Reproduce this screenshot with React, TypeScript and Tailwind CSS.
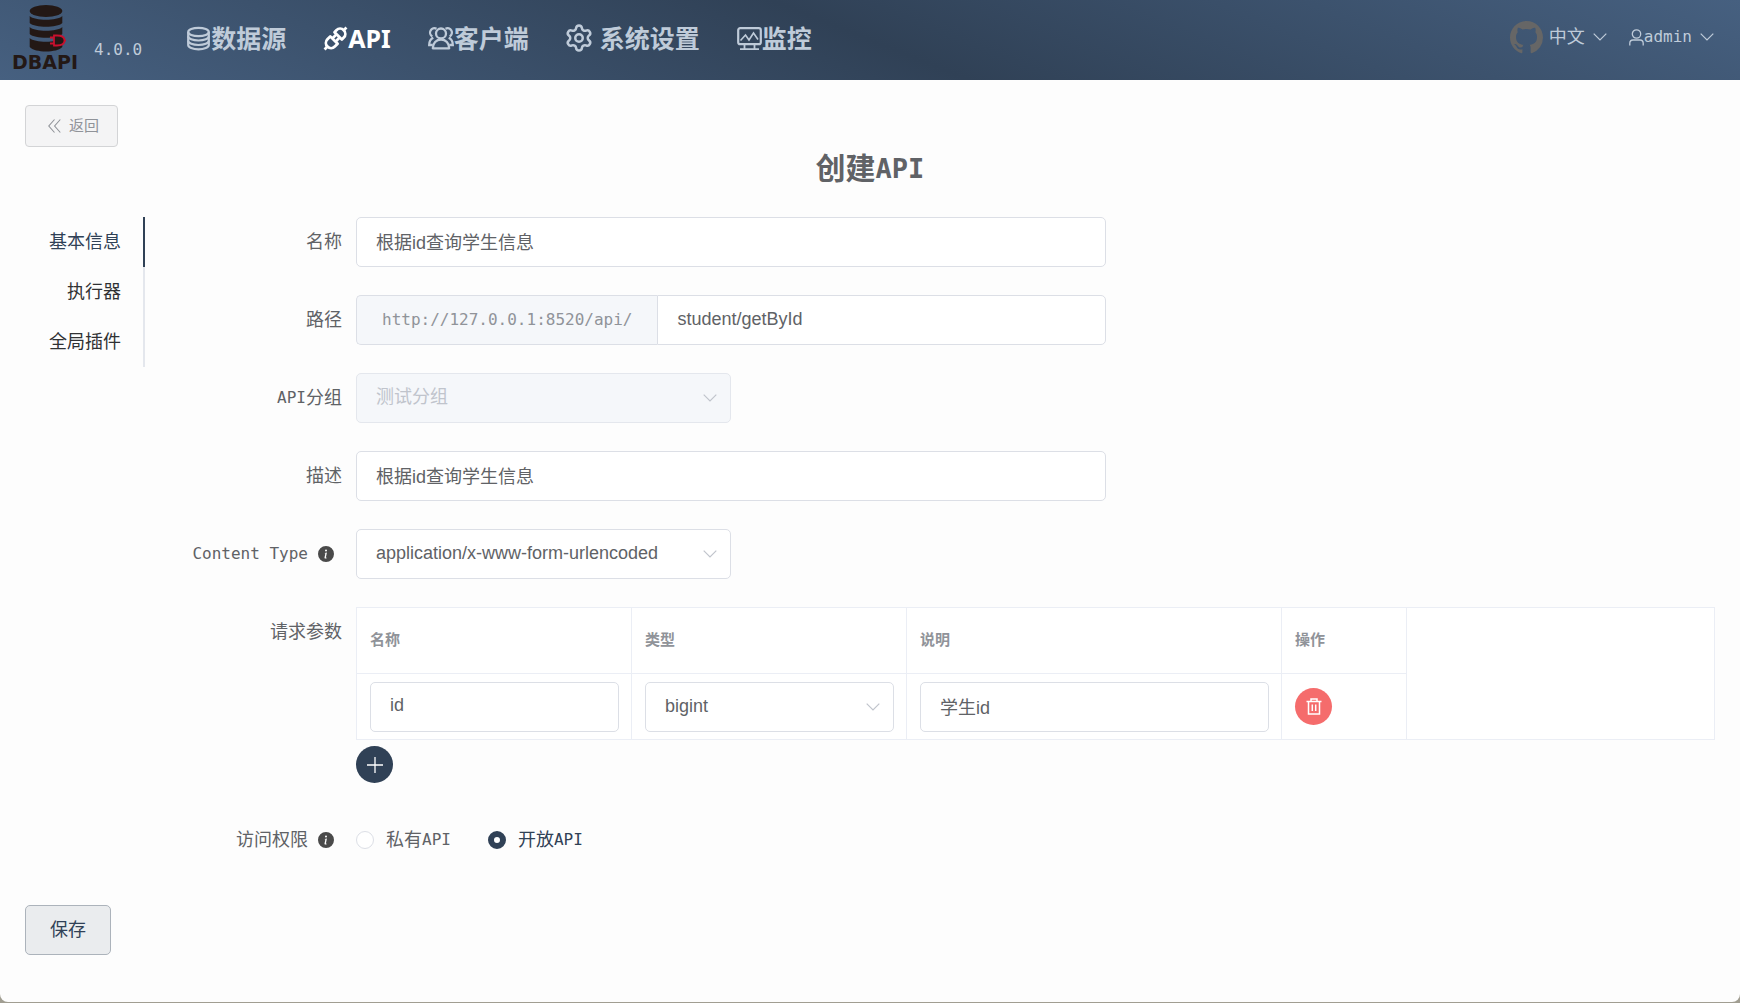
import React, { useState } from "react";
import { Settings } from "lucide-react";
import { BsInfoCircleFill } from "react-icons/bs";

const mono = "font-['DejaVu_Sans_Mono','Noto_Sans_CJK_SC',monospace]";

function Mono({ children }: { children: React.ReactNode }) {
  return <span className="font-['DejaVu_Sans_Mono',monospace] text-base leading-none">{children}</span>;
}

function Logo() {
  return (
    <div className="flex w-[66px] flex-col items-center pb-1">
      <svg viewBox="0 0 66 48" className="h-12 w-[66px]" aria-hidden="true">
        <g fill="#231815">
          <ellipse cx="34" cy="6" rx="16.300" ry="6" />
          <path d="M17.700 11c5 5 27.600 5 32.600 0v7c-5 5-27.600 5-32.600 0z" />
          <path d="M17.700 22c5 5 27.600 5 32.600 0v7c-5 5-27.600 5-32.600 0z" />
          <path d="M17.700 33c5 5 27.600 5 32.600 0v9c-5 6-27.600 6-32.600 0z" />
        </g>
        <path
          d="M42 30.500h3c5 0 7.500 2 7.500 5s-2.500 5-7.500 5h-3zM38 32.500h4M38 38.500h4M52 35.500h2"
          fill="#231815"
          stroke="#c8102e"
          strokeWidth="1.800"
        />
      </svg>
      <span className="font-['DejaVu_Sans',sans-serif] text-[19px] leading-[18px] font-bold text-[#231815]">DBAPI</span>
    </div>
  );
}

const navIcon = "h-[25px] shrink-0";

function CoinIcon() {
  return (
    <svg viewBox="0 0 24 25" className={`${navIcon} w-6`} fill="none" stroke="currentColor" strokeWidth="2.200" aria-hidden="true">
      <ellipse cx="11.500" cy="6" rx="10.300" ry="4.200" />
      <path d="M1.200 6v13c0 2.300 4.600 4.300 10.300 4.300s10.300-2 10.300-4.300V6" />
      <path d="M1.200 10.200c0 2.400 4.600 4.300 10.300 4.300s10.300-1.900 10.300-4.300M1.200 14.700c0 2.400 4.600 4.300 10.300 4.300s10.300-1.900 10.300-4.300" />
    </svg>
  );
}

function ConnectionIcon() {
  return (
    <svg viewBox="0 0 25 25" className={`${navIcon} w-[25px]`} fill="none" stroke="currentColor" strokeWidth="2.800" aria-hidden="true">
      <g transform="rotate(-45 12.500 12.500)">
        <path d="M10.300 7.300H6.300a5.200 5.200 0 0 0 0 10.400h4z" strokeLinejoin="round" />
        <path d="M16.300 7.300h2.700a5.200 5.200 0 0 1 0 10.400h-2.700z" strokeLinejoin="round" />
        <path d="M10.500 10.300h6M10.500 14.700h6M-3 12.500h4.500M24 12.500h4" />
      </g>
    </svg>
  );
}

function UsersIcon() {
  return (
    <svg viewBox="0 0 26 25" className={`${navIcon} w-[26px]`} fill="none" stroke="currentColor" strokeWidth="2.300" aria-hidden="true">
      <circle cx="13" cy="7.500" r="5" />
      <path d="M4.800 22.300c0-5 3.400-8.800 8.200-8.800s8.200 3.800 8.200 8.800z" strokeLinejoin="round" />
      <path d="M8.500 2.800a4.300 4.300 0 0 0-4.200 7.600M5.300 11.800c-2.700 1.200-4.100 3.700-4.100 7.200h3.500M17.500 2.800a4.300 4.300 0 0 1 4.200 7.600M20.700 11.800c2.700 1.200 4.100 3.700 4.100 7.200h-3.500" />
    </svg>
  );
}

function MonitorIcon() {
  return (
    <svg viewBox="0 0 25 25" className={`${navIcon} w-[25px]`} fill="none" stroke="currentColor" strokeWidth="2.200" aria-hidden="true">
      <rect x="1.200" y="2.200" width="22.600" height="16" rx="2" />
      <path d="M3.500 14.500 8.500 9l3.500 5 4.500-7 4.500 6.500" strokeWidth="1.600" />
      <path d="M7.500 18v5M17.500 18v5M3 23.200h19" strokeWidth="1.800" />
    </svg>
  );
}

function Chevron({ className }: { className: string }) {
  return (
    <svg viewBox="0 0 14 8" className={className} fill="none" stroke="currentColor" strokeWidth="1.200" aria-hidden="true">
      <path d="M.7.700 7 7 13.300.700" />
    </svg>
  );
}

function GithubIcon() {
  return (
    <svg viewBox="0 0 16 16" className="size-[33px]" fill="#666" aria-hidden="true">
      <path d="M8 0C3.58 0 0 3.58 0 8c0 3.54 2.29 6.53 5.47 7.59.4.07.55-.17.55-.38 0-.19-.01-.82-.01-1.49-2.01.37-2.53-.49-2.69-.94-.09-.23-.48-.94-.82-1.13-.28-.15-.68-.52-.01-.53.63-.01 1.08.58 1.23.82.72 1.21 1.87.87 2.33.66.07-.52.28-.87.51-1.07-1.78-.2-3.64-.89-3.64-3.95 0-.87.31-1.59.82-2.15-.08-.2-.36-1.02.08-2.12 0 0 .67-.21 2.2.82.64-.18 1.32-.27 2-.27.68 0 1.36.09 2 .27 1.53-1.04 2.2-.82 2.2-.82.44 1.1.16 1.92.08 2.12.51.56.82 1.27.82 2.15 0 3.07-1.87 3.75-3.65 3.95.29.25.54.73.54 1.48 0 1.07-.01 1.93-.01 2.2 0 .21.15.46.55.38A8.013 8.013 0 0 0 16 8c0-4.42-3.58-8-8-8z" />
    </svg>
  );
}

const navItems = [
  { label: "数据源", icon: <CoinIcon />, spaced: false },
  { label: "API", icon: <ConnectionIcon />, spaced: false },
  { label: "客户端", icon: <UsersIcon />, spaced: false },
  { label: "系统设置", icon: <Settings className="-mx-0.5 size-[30px] shrink-0" strokeWidth={2} />, spaced: true },
  { label: "监控", icon: <MonitorIcon />, spaced: false },
];

function Header() {
  return (
    <header className="flex h-20 items-center bg-[linear-gradient(22deg,#466080,#304156,#466080)] pr-[26px] pl-3 text-[#bfcbd9]">
      <Logo />
      <span className={`mt-5 ml-4 text-base ${mono}`}>4.0.0</span>
      <nav className="ml-[45px] flex items-center gap-[37px] pb-1">
        {navItems.map((item) => (
          <a
            key={item.label}
            href="#"
            aria-current={item.label === "API" ? "page" : undefined}
            className={`flex items-center font-['Noto_Sans','Noto_Sans_CJK_SC',sans-serif] text-[25px] leading-8 font-bold whitespace-nowrap ${
              item.label === "API" ? "text-white" : ""
            } ${item.spaced ? "gap-2" : ""}`}
          >
            {item.icon}
            <span>{item.label}</span>
          </a>
        ))}
      </nav>
      <div className="ml-auto flex items-center pb-1.5">
        <a href="#" aria-label="GitHub">
          <GithubIcon />
        </a>
        <button type="button" className="ml-1.5 flex items-center gap-2 text-lg leading-6">
          中文
          <Chevron className="h-2 w-3.5" />
        </button>
        <button type="button" className="ml-[22px] flex items-center leading-6">
          <svg viewBox="0 0 15 17" className="h-[17px] w-[15px]" fill="none" stroke="currentColor" strokeWidth="1.300" aria-hidden="true">
            <circle cx="7.500" cy="5" r="4.200" />
            <path d="M.8 16.500v-2.300c0-2 1.400-3.200 3.200-3.200h7c1.800 0 3.200 1.200 3.200 3.200v2.300" />
          </svg>
          <Mono>admin</Mono>
          <Chevron className="ml-2 h-2 w-3.5" />
        </button>
      </div>
    </header>
  );
}

const tabs = ["基本信息", "执行器", "全局插件"];

function SideTabs() {
  const [active, setActive] = useState(tabs[0]);
  return (
    <div role="tablist" aria-orientation="vertical" className="flex w-[120px] shrink-0 flex-col self-start">
      {tabs.map((tab) => (
        <button
          key={tab}
          type="button"
          role="tab"
          aria-selected={tab === active}
          onClick={() => setActive(tab)}
          className={`h-[50px] border-r-2 pr-[22px] text-right text-lg ${
            tab === active ? "border-[#304156] text-[#304156]" : "border-[#e4e7ed] text-[#303133]"
          }`}
        >
          {tab}
        </button>
      ))}
    </div>
  );
}

function Row({ label, htmlFor, info, children }: { label: React.ReactNode; htmlFor?: string; info?: boolean; children: React.ReactNode }) {
  return (
    <div className="flex items-start gap-3.5">
      <div className="flex h-[50px] w-[197px] shrink-0 items-center justify-end text-lg whitespace-nowrap">
        <label htmlFor={htmlFor} className="flex items-center">
          {label}
        </label>
        {info && <BsInfoCircleFill className="mr-2 ml-2.5 size-4 text-[#4a4a4a]" />}
      </div>
      <div className="min-w-0 flex-1">{children}</div>
    </div>
  );
}

const box =
  "h-[50px] w-full rounded-[5px] border border-[#dcdfe6] bg-white px-[19px] pb-0.5 font-['Liberation_Sans','Noto_Sans_CJK_SC',sans-serif] text-lg leading-6 text-[#606266] outline-none focus:border-[#304156]";

function SelectBox({ id, label, options, disabled }: { id: string; label?: string; options: string[]; disabled?: boolean }) {
  return (
    <div className="relative">
      <select
        id={id}
        aria-label={label}
        disabled={disabled}
        className={`${box} appearance-none disabled:border-[#e4e7ed] disabled:bg-[#f5f7fa] disabled:text-[#c0c4cc] disabled:opacity-100`}
      >
        {options.map((option) => (
          <option key={option}>{option}</option>
        ))}
      </select>
      <Chevron className="pointer-events-none absolute top-[21px] right-3.5 h-2 w-3.5 text-[#c0c4cc]" />
    </div>
  );
}

const cell = "border-r border-b border-[#ebeef5] pr-3 pl-[13px] text-left";

function ParamsTable() {
  return (
    <table className="w-full table-fixed border-separate border-spacing-0 border-t border-l border-[#ebeef5] bg-white">
      <colgroup>
        <col className="w-[275px]" />
        <col className="w-[275px]" />
        <col className="w-[375px]" />
        <col className="w-[125px]" />
        <col />
      </colgroup>
      <thead>
        <tr className="h-[66px] text-[15px] text-[#909399]">
          <th className={cell}>名称</th>
          <th className={cell}>类型</th>
          <th className={cell}>说明</th>
          <th className={cell}>操作</th>
          <td className="border-r border-[#ebeef5]" />
        </tr>
      </thead>
      <tbody>
        <tr className="h-[66px]">
          <td className={cell}>
            <input aria-label="名称" defaultValue="id" className={box} />
          </td>
          <td className={cell}>
            <SelectBox id="param-type" label="类型" options={["bigint", "string", "double", "date"]} />
          </td>
          <td className={cell}>
            <input aria-label="说明" defaultValue="学生id" className={box} />
          </td>
          <td className={cell}>
            <button type="button" aria-label="删除" className="flex size-[37px] items-center justify-center rounded-full bg-[#f56c6c] text-white">
              <svg viewBox="0 0 16 17" className="h-[17px] w-4" fill="none" stroke="currentColor" strokeWidth="1.500" aria-hidden="true">
                <path d="M.5 3.500h15M5 3.200V1h6v2.200M2.500 3.500V16h11V3.500M6.300 6.500v6.500M9.700 6.500v6.500" />
              </svg>
            </button>
          </td>
          <td className="border-r border-b border-[#ebeef5]" />
        </tr>
      </tbody>
    </table>
  );
}

function RadioOption({ value, text, checked, onSelect }: { value: string; text: string; checked: boolean; onSelect: () => void }) {
  return (
    <label className={`flex items-center text-lg ${checked ? "text-[#304156]" : ""}`}>
      <input
        type="radio"
        name="access"
        value={value}
        checked={checked}
        onChange={onSelect}
        className="mr-3 size-[18px] appearance-none rounded-full border border-[#dcdfe6] bg-white checked:border-[6px] checked:border-[#304156]"
      />
      {text}
      <Mono>API</Mono>
    </label>
  );
}

function BasicForm() {
  const [access, setAccess] = useState("open");
  return (
    <form className="flex min-w-0 flex-1 flex-col gap-7" onSubmit={(event) => event.preventDefault()}>
      <Row label="名称" htmlFor="name">
        <input id="name" defaultValue="根据id查询学生信息" className={`${box} max-w-[750px]`} />
      </Row>
      <Row label="路径" htmlFor="path">
        <div className="flex w-full max-w-[750px]">
          <span className={`flex items-center rounded-l-[5px] border border-r-0 border-[#dcdfe6] bg-[#f5f7fa] px-[25px] text-base text-[#909399] ${mono}`}>
            http://127.0.0.1:8520/api/
          </span>
          <input id="path" defaultValue="student/getById" className={`${box} min-w-0 flex-1 rounded-l-none`} />
        </div>
      </Row>
      <Row
        htmlFor="group"
        label={
          <>
            <Mono>API</Mono>分组
          </>
        }
      >
        <div className="max-w-[375px]">
          <SelectBox id="group" options={["测试分组"]} disabled />
        </div>
      </Row>
      <Row label="描述" htmlFor="note">
        <input id="note" defaultValue="根据id查询学生信息" className={`${box} max-w-[750px]`} />
      </Row>
      <Row label={<Mono>Content Type</Mono>} htmlFor="content-type" info>
        <div className="max-w-[375px]">
          <SelectBox id="content-type" options={["application/x-www-form-urlencoded", "application/json"]} />
        </div>
      </Row>
      <Row label="请求参数">
        <ParamsTable />
        <button type="button" aria-label="添加" className="mt-1.5 mb-1 flex size-[37px] items-center justify-center rounded-full bg-[#304156] text-white">
          <svg viewBox="0 0 16 16" className="size-4" stroke="currentColor" strokeWidth="1.300" aria-hidden="true">
            <path d="M8 0v16M0 8h16" />
          </svg>
        </button>
      </Row>
      <Row label="访问权限" info>
        <div role="radiogroup" aria-label="访问权限" className="flex h-[50px] items-center gap-[37px]">
          <RadioOption value="private" text="私有" checked={access === "private"} onSelect={() => setAccess("private")} />
          <RadioOption value="open" text="开放" checked={access === "open"} onSelect={() => setAccess("open")} />
        </div>
      </Row>
    </form>
  );
}

export default function App() {
  return (
    <div className="flex min-h-screen flex-col bg-[#a19e92] pb-px font-['Liberation_Sans','Noto_Sans_CJK_SC',sans-serif] text-[#606266]">
      <div className="flex flex-1 flex-col rounded-b-lg bg-[#fdfdfd]">
        <Header />
        <main className="flex flex-col items-start px-[25px] pt-[25px] pb-11">
          <button
            type="button"
            className="flex h-[42px] items-center gap-2 rounded-sm border border-[#d3d4d6] bg-[#f4f4f5] pr-[18px] pl-[22px] text-[15px] text-[#909399]"
          >
            <svg viewBox="0 0 13 14" className="h-3.5 w-[13px]" fill="none" stroke="currentColor" strokeWidth="1.100" aria-hidden="true">
              <path d="M6.500.500.800 7l5.700 6.500M12.300.500 6.600 7l5.700 6.500" />
            </svg>
            返回
          </button>
          <h1 className="flex h-11 items-center self-center text-3xl font-bold">
            创建<span className="font-['DejaVu_Sans_Mono',monospace] text-[27px]">API</span>
          </h1>
          <div className="mt-[26px] flex w-full">
            <SideTabs />
            <BasicForm />
          </div>
          <button type="button" className="mt-10 h-[50px] rounded-[5px] border border-[#acb3bb] bg-[#eaecee] px-6 text-lg text-[#304156]">
            保存
          </button>
        </main>
      </div>
    </div>
  );
}
